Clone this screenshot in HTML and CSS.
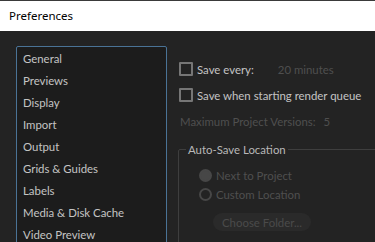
FILE: index.html
```html
<!DOCTYPE html>
<html lang="en">

<head>
    <meta charset="UTF-8">
    <meta name="viewport" content="width=device-width, initial-scale=1.0">
    <title>Preferences</title>
    <link rel="stylesheet" href="styles.css">
</head>

<body>
    <div class="window">
        <div class="title-bar">Preferences</div>
        <div class="content">
            <ul class="nav-list">
                <li>General</li>
                <li>Previews</li>
                <li>Display</li>
                <li>Import</li>
                <li>Output</li>
                <li>Grids &amp; Guides</li>
                <li>Labels</li>
                <li>Media &amp; Disk Cache</li>
                <li>Video Preview</li>
            </ul>

            <div class="panel">
                <div class="row">
                    <span class="checkbox"></span>
                    <span class="label">Save every:</span>
                    <span class="dim value">20 minutes</span>
                </div>
                <div class="row">
                    <span class="checkbox"></span>
                    <span class="label">Save when starting render queue</span>
                </div>
                <div class="row">
                    <span class="dim">Maximum Project Versions:</span>
                    <span class="dim versions">5</span>
                </div>

                <fieldset class="group">
                    <legend>Auto-Save Location</legend>
                    <div class="group-body">
                        <div class="radio-row">
                            <span class="radio checked"></span>
                            <span class="dim">Next to Project</span>
                        </div>
                        <div class="radio-row">
                            <span class="radio"></span>
                            <span class="dim">Custom Location</span>
                        </div>
                        <div class="btn">Choose Folder...</div>
                    </div>
                </fieldset>
            </div>
        </div>
    </div>
</body>

</html>
```

FILE: styles.css
```css
* {
    box-sizing: border-box;
    margin: 0;
    padding: 0;
}

body {
    background: #232323;
    overflow: hidden;
    font-family: Lato, 'Noto Sans', sans-serif;
    font-size: 11.4px;
    color: #c4c4c4;
}

.window {
    width: 375px;
    height: 242px;
    overflow: hidden;
}

.title-bar {
    height: 31px;
    background: #ffffff;
    border-top: 1px solid #3a3a3a;
    padding-left: 9px;
    padding-bottom: 1px;
    color: #000000;
    font-family: 'Noto Sans', sans-serif;
    font-size: 11.5px;

    display: flex;
    align-items: center;
}

.content {
    display: flex;
    flex-direction: row;
}

.nav-list {
    list-style: none;
    flex-shrink: 0;
    width: 151px;
    height: 230px;
    margin-top: 15px;
    margin-left: 16px;
    background: #1c1c1c;
    border: 1px solid #4a7396;
    border-radius: 2px;
}

.nav-list li {
    height: 22px;
    padding-left: 6px;
    white-space: nowrap;

    display: flex;
    align-items: center;
}

.panel {
    flex-shrink: 0;
    margin-left: 11px;
    padding-top: 25px;
    width: 260px;
}

.row {
    height: 26px;
    white-space: nowrap;

    display: flex;
    align-items: center;
}

.checkbox {
    width: 14px;
    height: 14px;
    border: 2px solid #767676;
    border-radius: 1px;
    margin-left: 1px;
    margin-right: 4px;
}

.dim {
    color: #4f4f4f;
}

.value {
    margin-left: 24px;
}

.row .dim:first-child {
    margin-left: 2px;
}

.versions {
    margin-left: 8px;
}

.group {
    margin-top: 9px;
    width: 260px;
    height: 120px;
    border: 1px solid #3e3e3e;
    border-radius: 2px;
    padding: 0;
}

.group legend {
    margin-left: 7px;
    padding: 0 2px;
    color: #b8b8b8;
}

.group-body {
    padding-left: 20px;
    padding-top: 10px;
}

.radio-row {
    height: 19px;
    white-space: nowrap;

    display: flex;
    align-items: center;
}

.radio {
    width: 13px;
    height: 13px;
    border: 2px solid #474747;
    border-radius: 50%;
    margin-right: 4px;
}

.radio.checked {
    background: #474747;
}

.btn {
    width: 98px;
    height: 18px;
    margin-top: 9px;
    margin-left: 14px;
    border-radius: 9px;
    background: #2a2a2a;
    color: #4a4a4a;

    display: flex;
    align-items: center;
    justify-content: center;
}
```
